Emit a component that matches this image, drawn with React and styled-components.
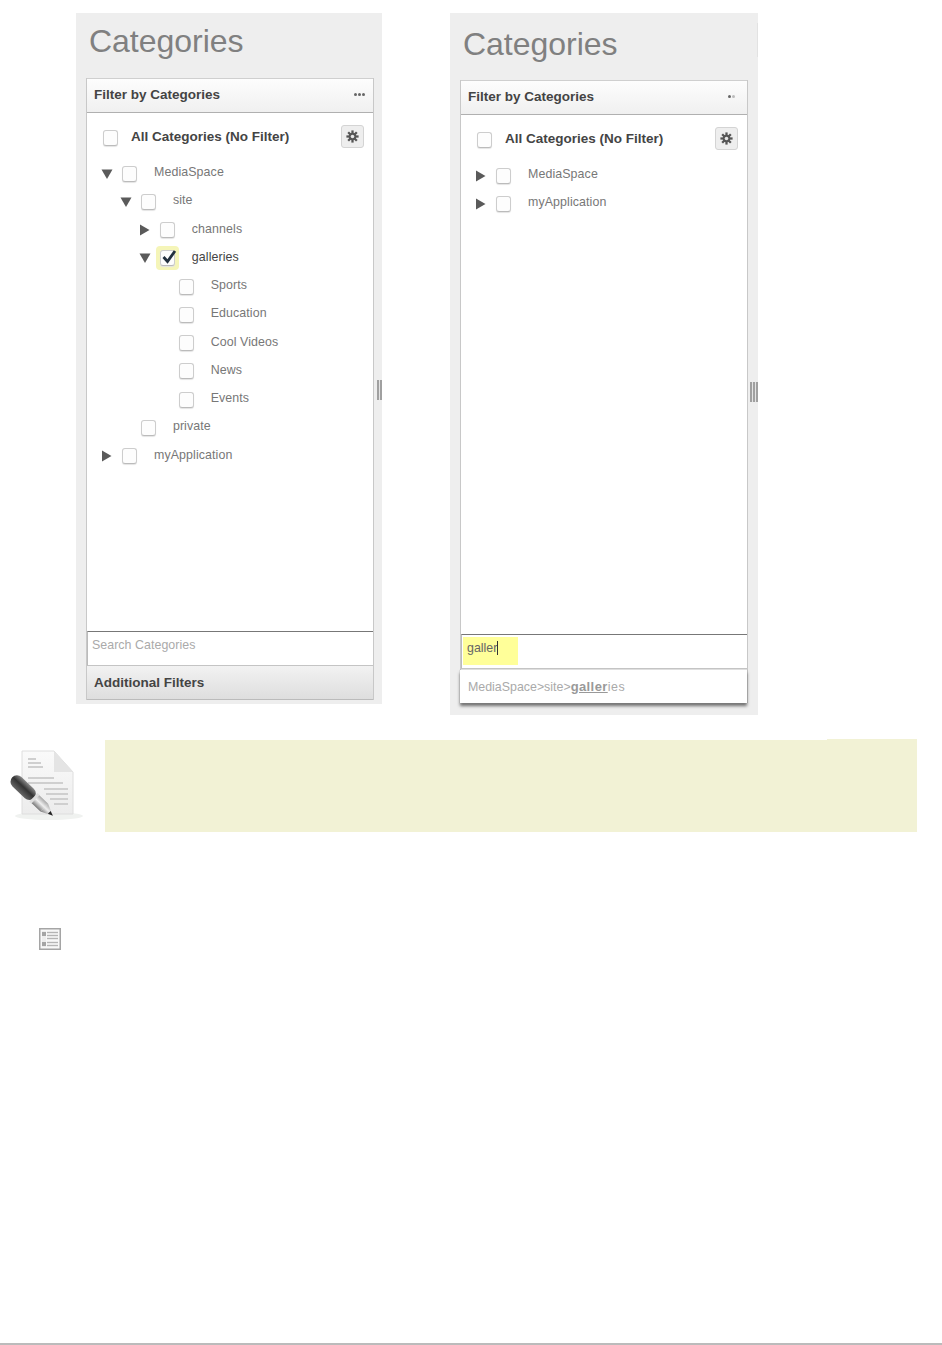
import React from 'react'
import styled, { createGlobalStyle } from 'styled-components'

const GlobalStyle = createGlobalStyle`
  html, body {
    margin: 0;
    background: #fff;
    font-family: 'Liberation Sans', Arial, sans-serif;
  }
`

const fullTree = [
  { depth: 0, arrow: 'down', label: 'MediaSpace' },
  { depth: 1, arrow: 'down', label: 'site' },
  { depth: 2, arrow: 'right', label: 'channels' },
  { depth: 2, arrow: 'down', label: 'galleries', checked: true },
  { depth: 3, label: 'Sports' },
  { depth: 3, label: 'Education' },
  { depth: 3, label: 'Cool Videos' },
  { depth: 3, label: 'News' },
  { depth: 3, label: 'Events' },
  { depth: 1, label: 'private' },
  { depth: 0, arrow: 'right', label: 'myApplication' }
]

const collapsedTree = [
  { depth: 0, arrow: 'right', label: 'MediaSpace' },
  { depth: 0, arrow: 'right', label: 'myApplication' }
]

const Arrow = ({ dir }) => (
  <ArrowSlot>
    {dir && (
      <svg width='12' height='12' viewBox='0 0 12 12'>
        <polygon
          fill='#5a5a5a'
          points={dir === 'down' ? '0.5,1.5 11.5,1.5 6,11' : '1,0.5 10.5,6 1,11.5'}
        />
      </svg>
    )}
  </ArrowSlot>
)

const Check = ({ checked }) => (
  <CheckWrap $checked={checked}>
    <CheckBox>
      {checked && (
        <CheckMark viewBox='0 0 16 14'>
          <polyline
            fill='none'
            stroke='#22303e'
            strokeWidth='2.8'
            points='2.5,7 6.5,11.5 14,1'
          />
        </CheckMark>
      )}
    </CheckBox>
  </CheckWrap>
)

const Gear = () => (
  <svg width='13' height='13' viewBox='0 0 16 16'>
    <g stroke='#555' strokeWidth='2.8'>
      <line x1='8' y1='0.5' x2='8' y2='15.5' />
      <line x1='0.5' y1='8' x2='15.5' y2='8' />
      <line x1='2.7' y1='2.7' x2='13.3' y2='13.3' />
      <line x1='13.3' y1='2.7' x2='2.7' y2='13.3' />
    </g>
    <circle cx='8' cy='8' r='4.6' fill='#555' />
    <circle cx='8' cy='8' r='2.2' fill='#e6e6e6' />
  </svg>
)

const TreeRow = ({ depth, arrow, label, checked }) => (
  <Row $depth={depth}>
    <Arrow dir={arrow} />
    <Check checked={checked} />
    <RowLabel $active={checked}>{label}</RowLabel>
  </Row>
)

const LeftPanel = () => (
  <Panel $width={306} $height={691} $right={8} $bottom={4}>
    <Title $pad={9}>Categories</Title>
    <FilterBox>
      <FilterHeader>
        <HeaderTitle>Filter by Categories</HeaderTitle>
        <Dots>
          <Dot /><Dot /><Dot />
        </Dots>
      </FilterHeader>
      <FilterBody>
        <AllRow>
          <Check />
          <AllLabel>All Categories (No Filter)</AllLabel>
          <GearButton><Gear /></GearButton>
        </AllRow>
        {fullTree.map((row) => <TreeRow key={row.label} {...row} />)}
      </FilterBody>
      <SearchBox>
        <SearchText>Search Categories</SearchText>
      </SearchBox>
      <FooterBar>Additional Filters</FooterBar>
    </FilterBox>
    <Grip $top={367} $lines={2} />
  </Panel>
)

const RightPanel = () => (
  <Panel $width={308} $height={702} $top={2} $right={10} $bottom={12}>
    <Title $pad={10}>Categories</Title>
    <EdgeNotch />
    <FilterBox>
      <FilterHeader>
        <HeaderTitle>Filter by Categories</HeaderTitle>
        <Dots>
          <Dot /><Dot $faded />
        </Dots>
      </FilterHeader>
      <FilterBody>
        <AllRow>
          <Check />
          <AllLabel>All Categories (No Filter)</AllLabel>
          <GearButton><Gear /></GearButton>
        </AllRow>
        {collapsedTree.map((row) => <TreeRow key={row.label} {...row} />)}
      </FilterBody>
      <SearchBox>
        <TypedText>galler<Caret /></TypedText>
      </SearchBox>
      <Suggestion>
        MediaSpace&gt;site&gt;<Match>galler</Match><Rest>ies</Rest>
      </Suggestion>
    </FilterBox>
    <Grip $top={369} $lines={3} />
  </Panel>
)

const NoteIcon = () => (
  <svg width='76' height='72' viewBox='0 0 76 72'>
    <defs>
      <linearGradient id='penBody' x1='0' y1='0' x2='0' y2='1'>
        <stop offset='0' stopColor='#a8a8a8' />
        <stop offset='0.45' stopColor='#efefef' />
        <stop offset='1' stopColor='#777' />
      </linearGradient>
      <linearGradient id='penCap' x1='0' y1='0' x2='0' y2='1'>
        <stop offset='0' stopColor='#888' />
        <stop offset='0.45' stopColor='#333' />
        <stop offset='1' stopColor='#666' />
      </linearGradient>
      <linearGradient id='sheet' x1='0' y1='0' x2='0' y2='1'>
        <stop offset='0' stopColor='#fafafa' />
        <stop offset='1' stopColor='#ececec' />
      </linearGradient>
    </defs>
    <ellipse cx='39' cy='66' rx='34' ry='4' fill='#f0f2f0' />
    <path d='M12 1H44L63 22V64H12Z' fill='url(#sheet)' stroke='#dedede' />
    <path d='M44 1V22H63Z' fill='#e4e4e4' />
    <g stroke='#cfcfcf' strokeWidth='2'>
      <line x1='18' y1='9' x2='26' y2='9' />
      <line x1='18' y1='13' x2='31' y2='13' />
      <line x1='18' y1='17' x2='33' y2='17' />
      <line x1='18' y1='28' x2='44' y2='28' />
      <line x1='18' y1='33' x2='53' y2='33' />
      <line x1='34' y1='39' x2='58' y2='39' />
      <line x1='36' y1='44' x2='58' y2='44' />
      <line x1='40' y1='49' x2='58' y2='49' />
      <line x1='44' y1='54' x2='58' y2='54' />
    </g>
    <g transform='translate(3 28) rotate(43.5)'>
      <rect x='-1' y='-6.5' width='30' height='13' rx='6.5' fill='url(#penCap)' />
      <rect x='28' y='-6' width='3' height='12' fill='#ddd' />
      <rect x='31' y='-5.5' width='12' height='11' fill='url(#penBody)' />
      <polygon points='43,-5.5 43,5.5 55,0' fill='url(#penBody)' />
      <polygon points='50,-2 50,2 55,0' fill='#222' />
    </g>
  </svg>
)

const ListIcon = () => (
  <svg width='22' height='22' viewBox='0 0 22 22'>
    <rect x='0.75' y='0.75' width='20.5' height='20.5' fill='#f8f8f8' stroke='#a5a5a5' strokeWidth='1.5' />
    <rect x='3' y='3' width='4' height='16' fill='#ededed' />
    <rect x='3' y='4' width='4' height='4' fill='#a5a5a5' />
    <rect x='3' y='14' width='4' height='4' fill='#a5a5a5' />
    <g stroke='#b5b5b5' strokeWidth='1.4'>
      <line x1='8' y1='4.5' x2='19' y2='4.5' />
      <line x1='8' y1='7.5' x2='19' y2='7.5' />
      <line x1='8' y1='10.5' x2='19' y2='10.5' />
      <line x1='8' y1='14.5' x2='19' y2='14.5' />
      <line x1='8' y1='17.5' x2='19' y2='17.5' />
    </g>
  </svg>
)

const App = () => (
  <>
    <GlobalStyle />
    <Page>
      <Panels>
        <LeftPanel />
        <RightPanel />
      </Panels>
      <NoteRow>
        <NoteIconSlot><NoteIcon /></NoteIconSlot>
        <NoteBox />
      </NoteRow>
      <ListIconRow><ListIcon /></ListIconRow>
      <PageRule />
    </Page>
  </>
)

export default App

const Page = styled.div`
  display: flex;
  flex-direction: column;
  height: 1345px;
  padding-top: 13px;
  box-sizing: border-box;
  overflow: hidden;
`

const Panels = styled.div`
  display: flex;
  align-items: flex-start;
  gap: 68px;
  height: 702px;
  padding-left: 76px;
`

const Panel = styled.section`
  position: relative;
  display: flex;
  flex-direction: column;
  box-sizing: border-box;
  width: ${(props) => props.$width}px;
  height: ${(props) => props.$height}px;
  padding: ${(props) => props.$top || 0}px ${(props) => props.$right}px ${(props) => props.$bottom}px 10px;
  background: #eeeeee;
`

const Title = styled.h1`
  height: 65px;
  margin: 0;
  padding: ${(props) => props.$pad}px 0 0 3px;
  box-sizing: border-box;
  font-size: 32px;
  font-weight: 400;
  line-height: 38px;
  letter-spacing: -0.02px;
  color: #808080;
`

const EdgeNotch = styled.div`
  position: absolute;
  top: 10px;
  right: 0;
  width: 1px;
  height: 34px;
  background: #e2e2e2;
`

const FilterBox = styled.div`
  flex: 1;
  display: flex;
  flex-direction: column;
  min-height: 0;
  border-left: 1px solid #c8c8c8;
  border-right: 1px solid #c8c8c8;
`

const FilterHeader = styled.header`
  display: flex;
  align-items: center;
  justify-content: space-between;
  flex: none;
  height: 35px;
  box-sizing: border-box;
  padding: 0 7px 2px;
  background: linear-gradient(#fdfdfd, #f0f0f0);
  border-top: 1px solid #cfcfcf;
  border-bottom: 1px solid #b0b0b0;
`

const HeaderTitle = styled.span`
  font-size: 13.5px;
  font-weight: 700;
  color: #444;
`

const Dots = styled.span`
  display: flex;
  gap: 1px;
  width: 13px;
  box-sizing: border-box;
  padding-left: 1px;
`

const Dot = styled.i`
  width: 3px;
  height: 3px;
  border-radius: 50%;
  background: ${(props) => (props.$faded ? '#bbb' : '#666')};
`

const FilterBody = styled.div`
  flex: 1;
  min-height: 0;
  padding: 11px 0 0 15px;
  background: #fff;
`

const AllRow = styled.div`
  display: flex;
  align-items: center;
  height: 24px;
  margin-bottom: 10px;
  padding: 0 9px 0 1px;
`

const AllLabel = styled.span`
  flex: 1;
  margin-left: 13px;
  font-size: 13.5px;
  font-weight: 700;
  color: #444;
`

const GearButton = styled.button`
  display: flex;
  align-items: center;
  justify-content: center;
  width: 23px;
  height: 23px;
  padding: 0;
  background: #eee;
  border: 1px solid #d4d4d4;
  border-radius: 3px;
`

const Row = styled.div`
  display: flex;
  align-items: center;
  height: 28.25px;
  padding-left: ${(props) => props.$depth * 18.9}px;
`

const ArrowSlot = styled.span`
  display: flex;
  flex: none;
  width: 21px;
  margin: 3px 0 0 -1px;
`

const CheckWrap = styled.span`
  display: flex;
  flex: none;
  align-items: center;
  justify-content: center;
  width: 15px;
  height: 16px;
  margin-top: 3px;
  position: relative;
  &::before {
    content: '';
    display: ${(props) => (props.$checked ? 'block' : 'none')};
    position: absolute;
    inset: -4px;
    background: #f5f5b8;
    border-radius: 4px;
  }
`

const CheckBox = styled.span`
  position: relative;
  box-sizing: border-box;
  width: 15px;
  height: 16px;
  background: #fdfdfd;
  border: 1px solid #cdcdcd;
  border-bottom-color: #bbb;
  border-radius: 3px;
  box-shadow: 0 1px 1px #e4e4e4;
`

const CheckMark = styled.svg`
  position: absolute;
  left: 0;
  top: -1px;
  width: 16px;
  height: 14px;
`

const RowLabel = styled.span`
  margin-left: 17px;
  font-size: 12.4px;
  letter-spacing: 0.1px;
  color: ${(props) => (props.$active ? '#444' : '#777')};
`

const SearchBox = styled.div`
  flex: none;
  height: 35px;
  box-sizing: border-box;
  padding: 2px 1px;
  background: #fff;
  border-top: 1px solid #777;
  border-left: 1px solid #bbb;
  border-bottom: 1px solid #c4c4c4;
`

const SearchText = styled.span`
  display: block;
  padding: 4px 3px;
  font-size: 12.4px;
  letter-spacing: 0.05px;
  color: #aaa;
`

const TypedText = styled.span`
  display: block;
  width: 55px;
  height: 28px;
  box-sizing: border-box;
  padding: 4px;
  background: #ffff99;
  font-size: 12.4px;
  color: #666;
`

const Caret = styled.i`
  display: inline-block;
  width: 1px;
  height: 14px;
  vertical-align: -3px;
  background: #333;
`

const FooterBar = styled.div`
  flex: none;
  height: 34px;
  box-sizing: border-box;
  padding: 0 7px;
  background: linear-gradient(#f2f2f2, #dedede);
  border-bottom: 1px solid #bbb;
  font-size: 13.5px;
  font-weight: 700;
  line-height: 34px;
  color: #444;
`

const Suggestion = styled.div`
  flex: none;
  height: 33px;
  box-sizing: border-box;
  padding: 0 8px;
  margin: 1px 0 0 -1px;
  background: #fff;
  box-shadow: 0 0 1px #999, 0 3px 3px #6f6f6f;
  font-size: 12.4px;
  line-height: 33px;
  color: #aaa;
`

const Match = styled.span`
  font-size: 13px;
  font-weight: 700;
  letter-spacing: 0.4px;
  color: #999;
  text-decoration: underline;
`

const Rest = styled.span`
  letter-spacing: 0.6px;
`

const Grip = styled.div`
  position: absolute;
  top: ${(props) => props.$top}px;
  right: 0;
  width: ${(props) => props.$lines * 3 - 1}px;
  height: 20px;
  background: repeating-linear-gradient(90deg, #a0a0a0 0 2px, #e4e4e4 2px 3px);
`

const NoteRow = styled.div`
  display: flex;
  align-items: flex-start;
  margin-top: 25px;
`

const NoteIconSlot = styled.div`
  flex: none;
  width: 105px;
  height: 92px;
  padding: 10px 0 0 10px;
  box-sizing: border-box;
`

const NoteBox = styled.div`
  position: relative;
  width: 812px;
  height: 92px;
  background: #f2f2d5;
  &::before {
    content: '';
    position: absolute;
    top: -1px;
    right: 0;
    width: 90px;
    height: 1px;
    background: #f2f2d5;
  }
`

const ListIconRow = styled.div`
  display: flex;
  margin-top: 96px;
  padding-left: 39px;
`

const PageRule = styled.div`
  margin-top: auto;
  height: 2px;
  background: #bbb;
`
